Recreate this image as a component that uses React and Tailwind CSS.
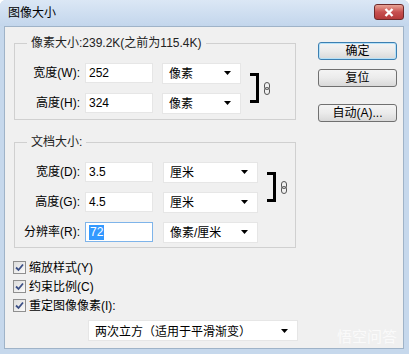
const font = "font-['Liberation_Sans','Noto_Sans_CJK_SC',sans-serif]";

function Arrow() {
  return (
    <svg width="7" height="4" viewBox="0 0 7 4" className="shrink-0">
      <path d="M0 0H7L3.5 4Z" fill="#000" />
    </svg>
  );
}

function Link() {
  return (
    <svg width="6" height="13" viewBox="0 0 6 13" className="shrink-0">
      <rect x="0.5" y="0.5" width="5" height="7" rx="2.5" fill="none" stroke="#555" />
      <rect x="0.5" y="5.5" width="5" height="7" rx="2.5" fill="none" stroke="#555" />
    </svg>
  );
}

function Select({ value, w }) {
  return (
    <div className={`${w} h-[21px] bg-white border border-[#e6e6e6] flex items-center justify-between pl-[6px] pr-[9px]`}>
      <span className="leading-none pt-[2px]">{value}</span>
      <Arrow />
    </div>
  );
}

function Field({ label, value, unit, selW, focus }) {
  return (
    <div className="flex items-center h-[20px]">
      <div className="w-[65px] text-right leading-none">{label}</div>
      <div
        className={`ml-[5px] w-[68px] h-[20px] bg-white border flex items-center pl-[3px] ${
          focus ? "border-[#7eb4ea]" : "border-[#e6e6e6]"
        }`}
      >
        {focus ? (
          <span className="bg-[#3399ff] text-white leading-[15px] px-[1px]">{value}</span>
        ) : (
          <span className="leading-none">{value}</span>
        )}
      </div>
      <div className={selW === "w-[79px]" ? "ml-[9px]" : "ml-[10px]"}>
        <Select value={unit} w={selW} />
      </div>
    </div>
  );
}

function Bracket() {
  return (
    <div className="flex items-center gap-[5px] ml-[9px]">
      <div className="w-[9px] h-[30px] border-t-[3px] border-b-[3px] border-r-[3px] border-black" />
      <Link />
    </div>
  );
}

function Group({ legend, children, cls }) {
  return (
    <fieldset className={`border border-[#d0d0d0] w-[282px] ${cls}`}>
      <legend className="ml-[12px] px-[4px] leading-[16px] text-[#222]">{legend}</legend>
      {children}
    </fieldset>
  );
}

function Check({ label }) {
  return (
    <div className="flex items-center h-[19px]">
      <div className="w-[13px] h-[13px] border border-[#8f8f8f] bg-gradient-to-br from-[#dcdcdc] to-[#fbfbfb] flex items-center justify-center">
        <svg width="9" height="9" viewBox="0 0 9 9">
          <path d="M1 4.5L3.5 7L8 1.5" fill="none" stroke="#3b4f86" strokeWidth="1.8" />
        </svg>
      </div>
      <span className="ml-[3px] leading-none">{label}</span>
    </div>
  );
}

function Btn({ children, primary }) {
  return (
    <div
      className={`w-[79px] h-[18px] rounded-[3px] border flex items-center justify-center leading-none bg-gradient-to-b from-[#f4f4f4] via-[#ebebeb] to-[#d9d9d9] ${
        primary ? "border-[#3c7fb1] shadow-[inset_0_0_0_1px_#b6e1f8]" : "border-[#707070]"
      }`}
    >
      {children}
    </div>
  );
}

export default function App() {
  return (
    <div className={`${font} w-[409px] h-[354px] bg-[#c6d8ec] rounded-t-[6px] flex flex-col text-[12px] text-black`}>
      <div className="h-[26px] flex items-center justify-between pl-[8px] pr-[5px] bg-gradient-to-b from-[#dbe7f5] to-[#c3d6ec] rounded-t-[6px]">
        <span className="leading-none">图像大小</span>
        <div className="w-[30px] h-[16px] mb-[2px] rounded-[3px] border border-[#6e2a2a] bg-gradient-to-b from-[#e8a496] via-[#c75050] to-[#b53a3a] flex items-center justify-center">
          <svg width="10" height="9" viewBox="0 0 10 9">
            <path d="M1.5 1L8.5 8M8.5 1L1.5 8" stroke="#fff" strokeWidth="2.4" />
          </svg>
        </div>
      </div>
      <div className="flex-1 ml-[4px] mr-[5px] mb-[5px] bg-[#f0f0f0] border border-[#9fb3c8] relative flex">
        <div className="pl-[9px] pt-[8px] flex flex-col">
          <Group legend="像素大小:239.2K(之前为115.4K)" cls="pt-[12px] pb-[6px]">
            <div className="flex items-center">
              <div className="flex flex-col gap-[10px]">
                <Field label="宽度(W):" value="252" unit="像素" selW="w-[79px]" />
                <Field label="高度(H):" value="324" unit="像素" selW="w-[79px]" />
              </div>
              <Bracket />
            </div>
          </Group>
          <Group legend="文档大小:" cls="mt-[14px] pt-[12px] pb-[5px]">
            <div className="flex flex-col gap-[10px]">
              <div className="flex items-center">
                <div className="flex flex-col gap-[10px]">
                  <Field label="宽度(D):" value="3.5" unit="厘米" selW="w-[95px]" />
                  <Field label="高度(G):" value="4.5" unit="厘米" selW="w-[95px]" />
                </div>
                <Bracket />
              </div>
              <Field label="分辨率(R):" value="72" unit="像素/厘米" selW="w-[95px]" focus />
            </div>
          </Group>
          <div className="mt-[10px] -ml-[1px] flex flex-col">
            <Check label="缩放样式(Y)" />
            <Check label="约束比例(C)" />
            <Check label="重定图像像素(I):" />
          </div>
          <div className="mt-[5px] ml-[74px]">
            <Select value="两次立方（适用于平滑渐变）" w="w-[210px]" />
          </div>
        </div>
        <div className="ml-[20px] pt-[15px] flex flex-col">
          <Btn primary>确定</Btn>
          <div className="mt-[9px]">
            <Btn>复位</Btn>
          </div>
          <div className="mt-[17px]">
            <Btn>自动(A)...</Btn>
          </div>
        </div>
        <div className="absolute right-[6px] bottom-[4px] text-[15px] text-white opacity-70 leading-none">悟空问答</div>
      </div>
    </div>
  );
}
